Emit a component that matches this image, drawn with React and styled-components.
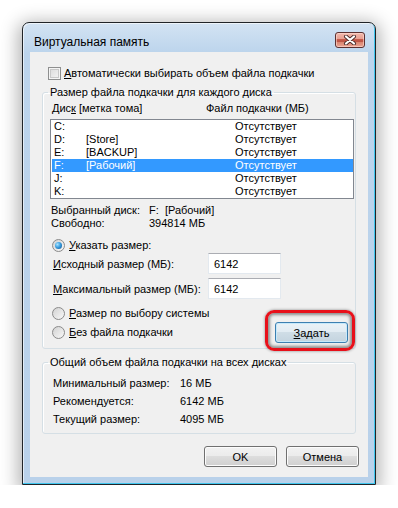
import React from "react";
import styled, { createGlobalStyle } from "styled-components";

const GlobalStyle = createGlobalStyle`
  body {
    margin: 0;
    background: #ffffff;
    font-family: "Liberation Sans", Arial, sans-serif;
    font-size: 11px;
    color: #000;
    white-space: nowrap;
  }
`;

const drives = [
  { letter: "C:", label: "", status: "Отсутствует" },
  { letter: "D:", label: "[Store]", status: "Отсутствует" },
  { letter: "E:", label: "[BACKUP]", status: "Отсутствует" },
  { letter: "F:", label: "[Рабочий]", status: "Отсутствует", selected: true },
  { letter: "J:", label: "", status: "Отсутствует" },
  { letter: "K:", label: "", status: "Отсутствует" },
];

const totals = [
  { name: "Минимальный размер:", value: "16 МБ" },
  { name: "Рекомендуется:", value: "6142 МБ" },
  { name: "Текущий размер:", value: "4095 МБ" },
];

const CloseGlyph = () => (
  <svg width="14" height="10" viewBox="0 0 14 10">
    <path d="M3 1.5 L11 8.5 M11 1.5 L3 8.5" stroke="#4a2a28" strokeWidth="4" strokeLinecap="round" />
    <path d="M3 1.5 L11 8.5 M11 1.5 L3 8.5" stroke="#ffffff" strokeWidth="2.2" strokeLinecap="round" />
  </svg>
);

export default function App() {
  return (
    <>
      <GlobalStyle />
      <Page>
        <Window>
          <TitleBar>
            <Title>Виртуальная память</Title>
            <CloseBtn>
              <CloseGlyph />
            </CloseBtn>
          </TitleBar>
          <Client>
            <CheckRow>
              <CheckBox />
              <span>
                <u>А</u>втоматически выбирать объем файла подкачки
              </span>
            </CheckRow>

            <Group $top={4}>
              <Legend>Размер файла подкачки для каждого диска</Legend>
              <ListHeader>
                <span>
                  Дис<u>к</u> [метка тома]
                </span>
                <span>Файл подкачки (МБ)</span>
              </ListHeader>
              <ListBox>
                {drives.map((d) => (
                  <ListRow key={d.letter} $selected={d.selected}>
                    <span>{d.letter}</span>
                    <span>{d.label}</span>
                    <span>{d.status}</span>
                  </ListRow>
                ))}
              </ListBox>
              <InfoGrid>
                <span>Выбранный диск:</span>
                <span>F:&nbsp; [Рабочий]</span>
                <span>Свободно:</span>
                <span>394814 МБ</span>
              </InfoGrid>

              <RadioRow $top={8}>
                <Radio $checked />
                <span>
                  <u>У</u>казать размер:
                </span>
              </RadioRow>
              <SizeRow $top={0}>
                <span>
                  <u>И</u>сходный размер (МБ):
                </span>
                <TextBox>6142</TextBox>
              </SizeRow>
              <SizeRow $top={4}>
                <span>
                  <u>М</u>аксимальный размер (МБ):
                </span>
                <TextBox>6142</TextBox>
              </SizeRow>

              <RadioRow $top={7}>
                <Radio />
                <span>
                  <u>Р</u>азмер по выбору системы
                </span>
              </RadioRow>
              <LastRow>
                <RadioRow $top={0}>
                  <Radio />
                  <span>
                    <u>Б</u>ез файла подкачки
                  </span>
                </RadioRow>
                <ButtonSpot>
                  <Button $default>
                    <u>З</u>адать
                  </Button>
                  <Highlight />
                </ButtonSpot>
              </LastRow>
            </Group>

            <Group $top={6}>
              <Legend>Общий объем файла подкачки на всех дисках</Legend>
              <TotalsGrid>
                {totals.map((t) => (
                  <React.Fragment key={t.name}>
                    <span>{t.name}</span>
                    <span>{t.value}</span>
                  </React.Fragment>
                ))}
              </TotalsGrid>
            </Group>

            <Footer>
              <Button>OK</Button>
              <Button>Отмена</Button>
            </Footer>
          </Client>
        </Window>
      </Page>
    </>
  );
}

const Page = styled.div`
  padding: 22px 0 0 22px;
`;

const Window = styled.div`
  box-sizing: border-box;
  width: 354px;
  height: 463px;
  display: flex;
  flex-direction: column;
  border: 1px solid #202428;
  border-radius: 7px 7px 0 0;
  background: linear-gradient(to bottom, #d3e3f3 0px, #bcd4ec 30px, #b9d1ea 100%);
  box-shadow: 0 4px 18px 4px rgba(0, 0, 0, 0.3), inset -1px -1px 0 #3fc6ee,
    inset 1px 1px 0 rgba(255, 255, 255, 0.6);
`;

const TitleBar = styled.div`
  box-sizing: border-box;
  height: 29px;
  flex: none;
  display: flex;
  justify-content: space-between;
  align-items: flex-start;
  padding: 9px 10px 0 11px;
`;

const Title = styled.div`
  font-size: 12px;
  line-height: 16px;
  margin-top: 2px;
  color: #000;
`;

const CloseBtn = styled.div`
  box-sizing: border-box;
  width: 30px;
  height: 16px;
  display: flex;
  align-items: center;
  justify-content: center;
  border: 1px solid #5b3030;
  border-radius: 3px;
  background: linear-gradient(
    to bottom,
    #f2b9ad 0%,
    #e8a193 40%,
    #c8604f 45%,
    #bb4d3f 60%,
    #d9846f 65%,
    #eaa392 100%
  );
  box-shadow: inset 0 0 0 1px rgba(255, 220, 210, 0.6);
`;

const Client = styled.div`
  flex: 1;
  min-height: 0;
  margin: 0 7px 7px 7px;
  background: #f0f0f0;
  padding: 0 12px;
  display: flex;
  flex-direction: column;
`;

const CheckRow = styled.div`
  display: flex;
  align-items: center;
  gap: 3px;
  padding-left: 6px;
  margin-top: 14px;
  line-height: 15px;
`;

const CheckBox = styled.div`
  box-sizing: border-box;
  width: 13px;
  height: 13px;
  border: 1px solid #8e8f8f;
  background: linear-gradient(135deg, #d8d8d8, #f6f6f6);
  box-shadow: inset 0 0 0 1px #f4f4f4, inset 0 0 0 2px #c8c8c8;
`;

const Group = styled.fieldset`
  margin: ${(p) => p.$top}px 0 0 0;
  padding: 0;
  min-width: 0;
  border: 1px solid #d5dfe5;
  border-radius: 3px;
  box-shadow: inset 1px 1px 0 #ffffff;
`;

const Legend = styled.legend`
  margin-left: 5px;
  padding: 0 2px;
  line-height: 15px;
`;

const ListHeader = styled.div`
  display: grid;
  grid-template-columns: 154px 1fr;
  padding-left: 9px;
  margin-top: 1px;
  line-height: 15px;
`;

const ListBox = styled.div`
  box-sizing: border-box;
  height: 80px;
  margin: 3px 1px 0 7px;
  border: 1px solid #828790;
  background: #ffffff;
  padding: 0 0 0 1px;
`;

const ListRow = styled.div`
  display: grid;
  grid-template-columns: 32px 149px 1fr;
  padding-left: 2px;
  height: 13px;
  line-height: 13px;
  background: ${(p) => (p.$selected ? "#3399ff" : "transparent")};
  color: ${(p) => (p.$selected ? "#ffffff" : "#000000")};
`;

const InfoGrid = styled.div`
  display: grid;
  grid-template-columns: 98px 1fr;
  padding-left: 8px;
  margin-top: 5px;
  line-height: 13px;
`;

const RadioRow = styled.div`
  display: flex;
  align-items: center;
  gap: 4px;
  padding-left: 9px;
  margin-top: ${(p) => p.$top}px;
  line-height: 15px;
`;

const Radio = styled.div`
  box-sizing: border-box;
  width: 13px;
  height: 13px;
  border-radius: 50%;
  border: 1px solid #8a8a8a;
  background: linear-gradient(135deg, #d2d2d2, #f8f8f8);
  display: flex;
  align-items: center;
  justify-content: center;
  &::after {
    content: "";
    display: ${(p) => (p.$checked ? "block" : "none")};
    width: 7px;
    height: 7px;
    border-radius: 50%;
    background: radial-gradient(circle at 35% 35%, #a8e4ff 0%, #3b9ee0 45%, #0c4f8a 100%);
  }
`;

const SizeRow = styled.div`
  display: flex;
  align-items: center;
  justify-content: space-between;
  padding: 0 74px 0 10px;
  margin-top: ${(p) => p.$top}px;
`;

const TextBox = styled.div`
  box-sizing: border-box;
  width: 73px;
  height: 21px;
  padding: 3px 0 0 5px;
  background: #ffffff;
  border: 1px solid #e3e9ef;
  border-top-color: #abadb3;
  line-height: 14px;
`;

const LastRow = styled.div`
  display: flex;
  justify-content: space-between;
  align-items: center;
  margin-top: 1px;
  padding: 0 7px 5px 0;
`;

const ButtonSpot = styled.div`
  position: relative;
  display: flex;
`;

const Button = styled.div`
  box-sizing: border-box;
  width: 73px;
  height: 21px;
  display: flex;
  align-items: center;
  justify-content: center;
  border: 1px solid ${(p) => (p.$default ? "#3c7fb1" : "#707070")};
  border-radius: 3px;
  background: ${(p) =>
    p.$default
      ? "linear-gradient(to bottom, #eaf2f7 0%, #e1ebf2 50%, #cfdde6 50%, #c4d4df 100%)"
      : "linear-gradient(to bottom, #f2f2f2 0%, #ebebeb 50%, #dddddd 50%, #cfcfcf 100%)"};
  box-shadow: inset 0 0 0 1px ${(p) => (p.$default ? "#c6e9fb" : "#fcfcfc")};
  line-height: 14px;
`;

const Highlight = styled.div`
  position: absolute;
  top: -12px;
  left: -10px;
  right: -7px;
  bottom: -8px;
  border: 3px solid #e8101a;
  border-radius: 9px;
  box-shadow: inset 0 0 3px 2px rgba(60, 60, 60, 0.55), 0 0 3px rgba(0, 0, 0, 0.45);
  pointer-events: none;
`;

const TotalsGrid = styled.div`
  display: grid;
  grid-template-columns: 127px 1fr;
  padding: 4px 0 5px 10px;
  line-height: 18px;
`;

const Footer = styled.div`
  display: flex;
  justify-content: flex-end;
  gap: 9px;
  margin: 12px -3px 0 0;
`;
